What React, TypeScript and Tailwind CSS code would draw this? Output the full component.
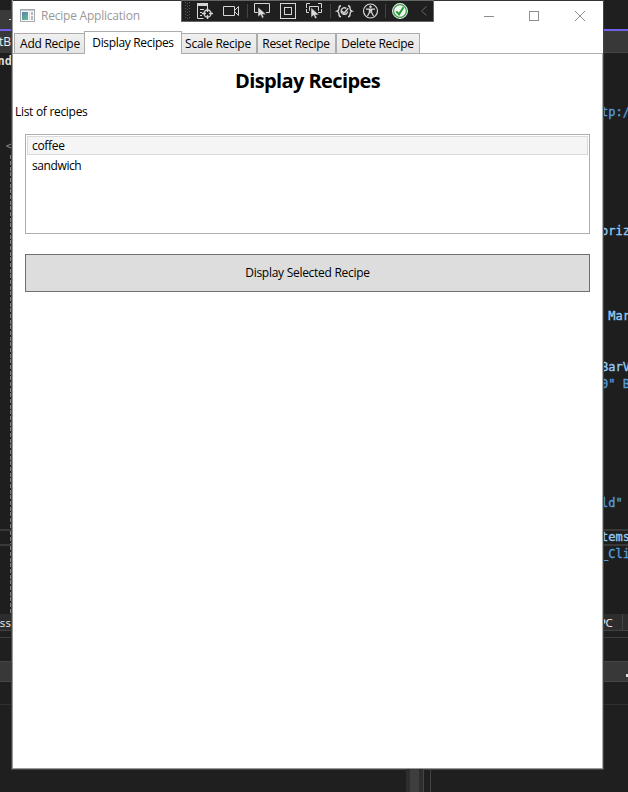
import React from "react";

const ui = "font-['Open_Sans','Noto_Sans',sans-serif]";
const mono = "font-['DejaVu_Sans_Mono',monospace]";

const CODE: Record<number, { text: string; tone: string }> = {
  3: { text: "tp:/", tone: "text-[#569cd6]" },
  10: { text: "oriz", tone: "text-[#92caf4]" },
  15: { text: " Mar", tone: "text-[#92caf4]" },
  18: { text: "BarV", tone: "text-[#92caf4]" },
  19: { text: '0" B', tone: "text-[#569cd6]" },
  26: { text: 'ld"', tone: "text-[#569cd6]" },
  28: { text: "tems", tone: "text-[#92caf4]" },
  29: { text: "_Cli", tone: "text-[#569cd6]" },
};

const ROWS = Array.from({ length: 33 }, (_, i) => i);

function EditorLeft() {
  return (
    <div className="h-[561px] shrink-0 bg-[#1e1e1e]">
      {ROWS.map((i) => (
        <div
          key={i}
          className={`flex h-[17px] justify-end overflow-hidden whitespace-pre text-[12px] leading-[17px] ${mono} ${i === 28 ? "border-y-2 border-[#393939]" : ""}`}
        >
          {i === 0 && <span className="-mr-px font-bold text-[#dcdcdc]">nd</span>}
          {i === 5 && <span className="-mr-[2px] text-[#808080]">&lt;</span>}
          {i > 5 && <span className="w-px bg-[repeating-linear-gradient(#808080_0_4px,#1e1e1e_4px_6px)]" />}
        </div>
      ))}
    </div>
  );
}

function EditorRight() {
  return (
    <div className="h-[561px] shrink-0 bg-[#1e1e1e]">
      {ROWS.map((i) => (
        <div
          key={i}
          className={`flex h-[17px] items-center overflow-hidden whitespace-pre text-[12px] leading-[17px] ${mono} ${i === 28 ? "border-y-2 border-[#393939]" : ""}`}
        >
          {CODE[i] && <span className={`-ml-[3px] [-webkit-text-stroke:0.35px_currentColor] ${CODE[i].tone}`}>{CODE[i].text}</span>}
        </div>
      ))}
    </div>
  );
}

function PanelRows({ label, right }: { label: string; right?: boolean }) {
  return (
    <div className={`flex flex-col ${ui}`}>
      <div className={`flex h-[17px] overflow-hidden border-b border-[#444] bg-[#2d2d2d] text-[11.5px] leading-[17px] text-[#f0f0f0] ${right ? "" : "justify-end"}`}>
        <span className={right ? "-ml-[5px] w-[24px] border-r border-[#444] tracking-[-0.4px]" : "tracking-[0.1px]"}>{label}</span>
      </div>
      <div className="h-[6px]" />
      <div className="h-px bg-[#3d3d3d]" />
      <div className="h-[23px]" />
      <div className="flex h-[21px] items-center justify-end border-y border-[#464646] bg-[#383838]">
        {right && <span className="mt-[8px] h-[3px] w-[2px] bg-[#ddd]" />}
      </div>
      <div className="h-[22px]" />
      <div className="h-px bg-[#303030]" />
    </div>
  );
}

function Cursor({ x, y }: { x: number; y: number }) {
  return <path transform={`translate(${x} ${y})`} d="M0 0v10l2.6-2.2 1.500 3.400 1.900-.900-1.500-2.900H8.200z" fill="#dcdcdc" stroke="#1f1f1f" strokeWidth=".5" />;
}

function DebugToolbar() {
  return (
    <div className="absolute left-[169px] top-0 h-[22px] w-[253px] border border-[#666] bg-[#1f1f1f]">
      <svg width="251" height="20" viewBox="182 1 251 20" fill="none" stroke="#d6d6d6" className="block">
        <g fill="#5c5c5c" stroke="none">
          {[3, 6, 9, 12, 15, 18].map((y) => (
            <g key={y}>
              <rect x="185" y={y - 1} width="1" height="1" />
              <rect x="189" y={y - 1} width="1" height="1" />
              <rect x="187" y={y} width="1" height="1" />
            </g>
          ))}
        </g>
        <path d="M197 4.500h11" strokeWidth="3" />
        <path d="M197.500 5v13.500h6M207.500 5v3M200 9.500h4M200 12.500h2M200 15.500h2" />
        <circle cx="207.500" cy="13.500" r="3.500" strokeWidth="1.300" />
        <path d="M207.500 8v4M207.500 15v4M202 13.500h4M209 13.500h4" strokeWidth="1.300" />
        <path d="M223.500 6.500h11v9h-11zM235 10l3.500-3.500v9L235 12" />
        <path d="M247.500 4v14" stroke="#444" />
        <path d="M258 12.500h-3.500v-9h15v9H266" />
        <Cursor x={258} y={7} />
        <rect x="280.500" y="3.500" width="15" height="15" />
        <rect x="284.500" y="7.500" width="7" height="7" />
        <path d="M306.500 8V3.500H310M318 3.500h3.500V8M306.500 9v3.500H309M321.500 9v3.500H318M310 10.500h-.500v-4h9v4H318" />
        <Cursor x={311} y={7.5} />
        <path d="M330.500 4v14" stroke="#444" />
        <g strokeWidth="1.400">
          <path d="M341 5.700c-2 0-2 1-2 2.500 0 1.500-.500 2.500-2 3 1.500.500 2 1.500 2 3 0 1.500 0 2.500 2 2.500M348 5.700c2 0 2 1 2 2.500 0 1.500.500 2.500 2 3-1.500.500-2 1.500-2 3 0 1.500 0 2.500-2 2.500" />
          <path d="m342 11 2 2.300 4.200-5" />
          <path d="M347.700 11.500a3.300 3.300 0 1 1-1.500-3.200" />
        </g>
        <circle cx="370.500" cy="11" r="7" strokeWidth="1.200" />
        <circle cx="370.500" cy="6.800" r="1.300" fill="#d6d6d6" stroke="none" />
        <path d="M366 9.200h9M369.400 9.500v3l-1.900 3.500M371.600 9.500v3l1.900 3.500" strokeWidth="1.200" />
        <path d="M369.400 10.200h2.200M369.400 12h2.200" strokeWidth="1.400" />
        <path d="M385.500 4v14" stroke="#444" />
        <circle cx="400" cy="11" r="7.300" fill="#fff" stroke="#f0f0f0" strokeWidth="1.300" />
        <circle cx="400" cy="11" r="6.400" fill="#f3f7f3" stroke="#3da04a" strokeWidth="1.300" />
        <path d="m396.300 11.300 2.700 3 4.500-7" stroke="#219b32" strokeWidth="2" />
        <path d="m426.500 6.500-5 4.500 5 4.500" stroke="#666" />
      </svg>
    </div>
  );
}

function TitleBar() {
  return (
    <div className="relative flex h-[30px] shrink-0 items-center border-t border-[#333]">
      <svg width="16" height="14" viewBox="0 0 16 14" className="ml-[7px]">
        <defs>
          <linearGradient id="appicon" x2=".6" y2="1">
            <stop stopColor="#5583b0" />
            <stop offset="1" stopColor="#66b58c" />
          </linearGradient>
        </defs>
        <rect x=".5" y=".5" width="14" height="12" fill="#f7f7f7" stroke="#a5abb0" />
        <path d="M1 1.500h13" stroke="#c3c8cc" />
        <rect x="2" y="3" width="6" height="8" fill="url(#appicon)" />
        <path d="M9.500 3v8" stroke="#dfe5e8" />
        <path d="M12 3v3M12 7v4" stroke="#b5bcc2" strokeWidth="2" />
      </svg>
      <span className="ml-[5px] text-[12px] leading-4 tracking-[-0.22px] text-[#999]">Recipe Application</span>
      <svg width="110" height="12" viewBox="0 0 110 12" fill="none" stroke="#8e8e8e" className="ml-auto mr-[15px]">
        <path d="M6 6.500h10" />
        <rect x="51.500" y="1.500" width="9" height="9" />
        <path d="m97 1 10 10M107 1 97 11" />
      </svg>
    </div>
  );
}

const TABS = [
  { label: "Add Recipe", cls: "w-[71px]", text: "pl-px tracking-[-0.25px]" },
  { label: "Display Recipes", cls: "w-[98px]", text: "tracking-[-0.33px]" },
  { label: "Scale Recipe", cls: "w-[76px]", text: "-ml-[2px] tracking-[-0.25px]" },
  { label: "Reset Recipe", cls: "w-[79px]", text: "-ml-px tracking-[-0.3px]" },
  { label: "Delete Recipe", cls: "w-[84px]", text: "-ml-px tracking-[-0.3px]" },
];

function Tabs() {
  return (
    <div className="flex h-[24px] shrink-0 items-end pl-px">
      {TABS.map((t, i) =>
        i === 1 ? (
          <button key={t.label} className={`relative z-10 -mx-px flex h-[23px] items-center justify-center border border-b-0 border-[#acacac] bg-white pb-px whitespace-nowrap ${t.cls}`}>
            <span className={t.text}>{t.label}</span>
          </button>
        ) : (
          <button key={t.label} className={`flex h-[21px] items-center justify-center border border-[#acacac] bg-linear-to-b from-[#f0f0f0] to-[#e5e5e5] whitespace-nowrap ${t.cls}`}>
            <span className={t.text}>{t.label}</span>
          </button>
        )
      )}
    </div>
  );
}

function RecipeWindow() {
  return (
    <div className={`relative flex h-[769px] w-[592px] shrink-0 flex-col border-r border-[#444] bg-white text-[12px] leading-4 text-black ${ui}`}>
      <div className="flex h-full flex-col border-b border-l border-[#999]">
        <TitleBar />
        <Tabs />
        <div className="-mt-px flex flex-1 flex-col border-r border-t border-[#acacac]">
          <h1 className="mt-[12px] text-center text-[20px] leading-[30px] font-bold tracking-[-0.6px]">Display Recipes</h1>
          <p className="mt-[8px] ml-[2px] leading-4 tracking-[-0.3px]">List of recipes</p>
          <ul className="mx-[12px] mt-[14px] h-[100px] border border-[#abadb3] p-px">
            <li className="flex h-[19px] items-center border border-[#dadada] bg-[#f5f5f5] pt-px pl-[4px] tracking-[-0.3px]">coffee</li>
            <li className="flex h-[22px] items-center pl-[5px] tracking-[-0.4px]">sandwich</li>
          </ul>
          <button className="mx-[12px] mt-[20px] h-[38px] border border-[#707070] bg-[#ddd]">
            <span className="tracking-[-0.28px]">Display Selected Recipe</span>
          </button>
        </div>
      </div>
      <DebugToolbar />
    </div>
  );
}

export default function App() {
  return (
    <div className="h-[792px] w-[628px] overflow-hidden bg-[#1f1f1f]">
      <div className="flex h-[769px]">
        <div className="flex w-[12px] shrink-0 flex-col overflow-hidden border-r border-[#444]">
          <div className="h-[10px] shrink-0" />
          <div className="flex h-[19px] shrink-0 items-center justify-end bg-[#3a3a3a]">
            <span className="h-px w-[2px] bg-[#ddd]" />
          </div>
          <div className="h-[2px] shrink-0 bg-[#7160e8]" />
          <div className={`flex h-[22px] shrink-0 items-center justify-end bg-[#383838] text-[12px] text-[#f0f0f0] ${ui}`}>stB</div>
          <EditorLeft />
          <PanelRows label="iss" />
        </div>
        <RecipeWindow />
        <div className="flex w-[24px] shrink-0 flex-col overflow-hidden">
          <div className="h-[29px] shrink-0" />
          <div className="h-[2px] shrink-0 bg-[#7160e8]" />
          <div className="h-[22px] shrink-0 border-b border-[#464646] bg-[#383838]" />
          <EditorRight />
          <PanelRows label="PC" right />
        </div>
      </div>
      <div className="flex h-[23px] pl-[11px]">
        <div className="w-[395px] border-t border-[#444]" />
        <div className="w-[4px] bg-[#2e2e2e]" />
        <div className="w-[9px] bg-[#3e3e3e]" />
        <div className="w-[4px] bg-[#2e2e2e]" />
        <div className="w-px bg-[#444]" />
        <div className="w-[6px] border-t border-[#444]" />
        <div className="w-px bg-[#444]" />
        <div className="w-[173px] border-t border-[#444]" />
      </div>
    </div>
  );
}
